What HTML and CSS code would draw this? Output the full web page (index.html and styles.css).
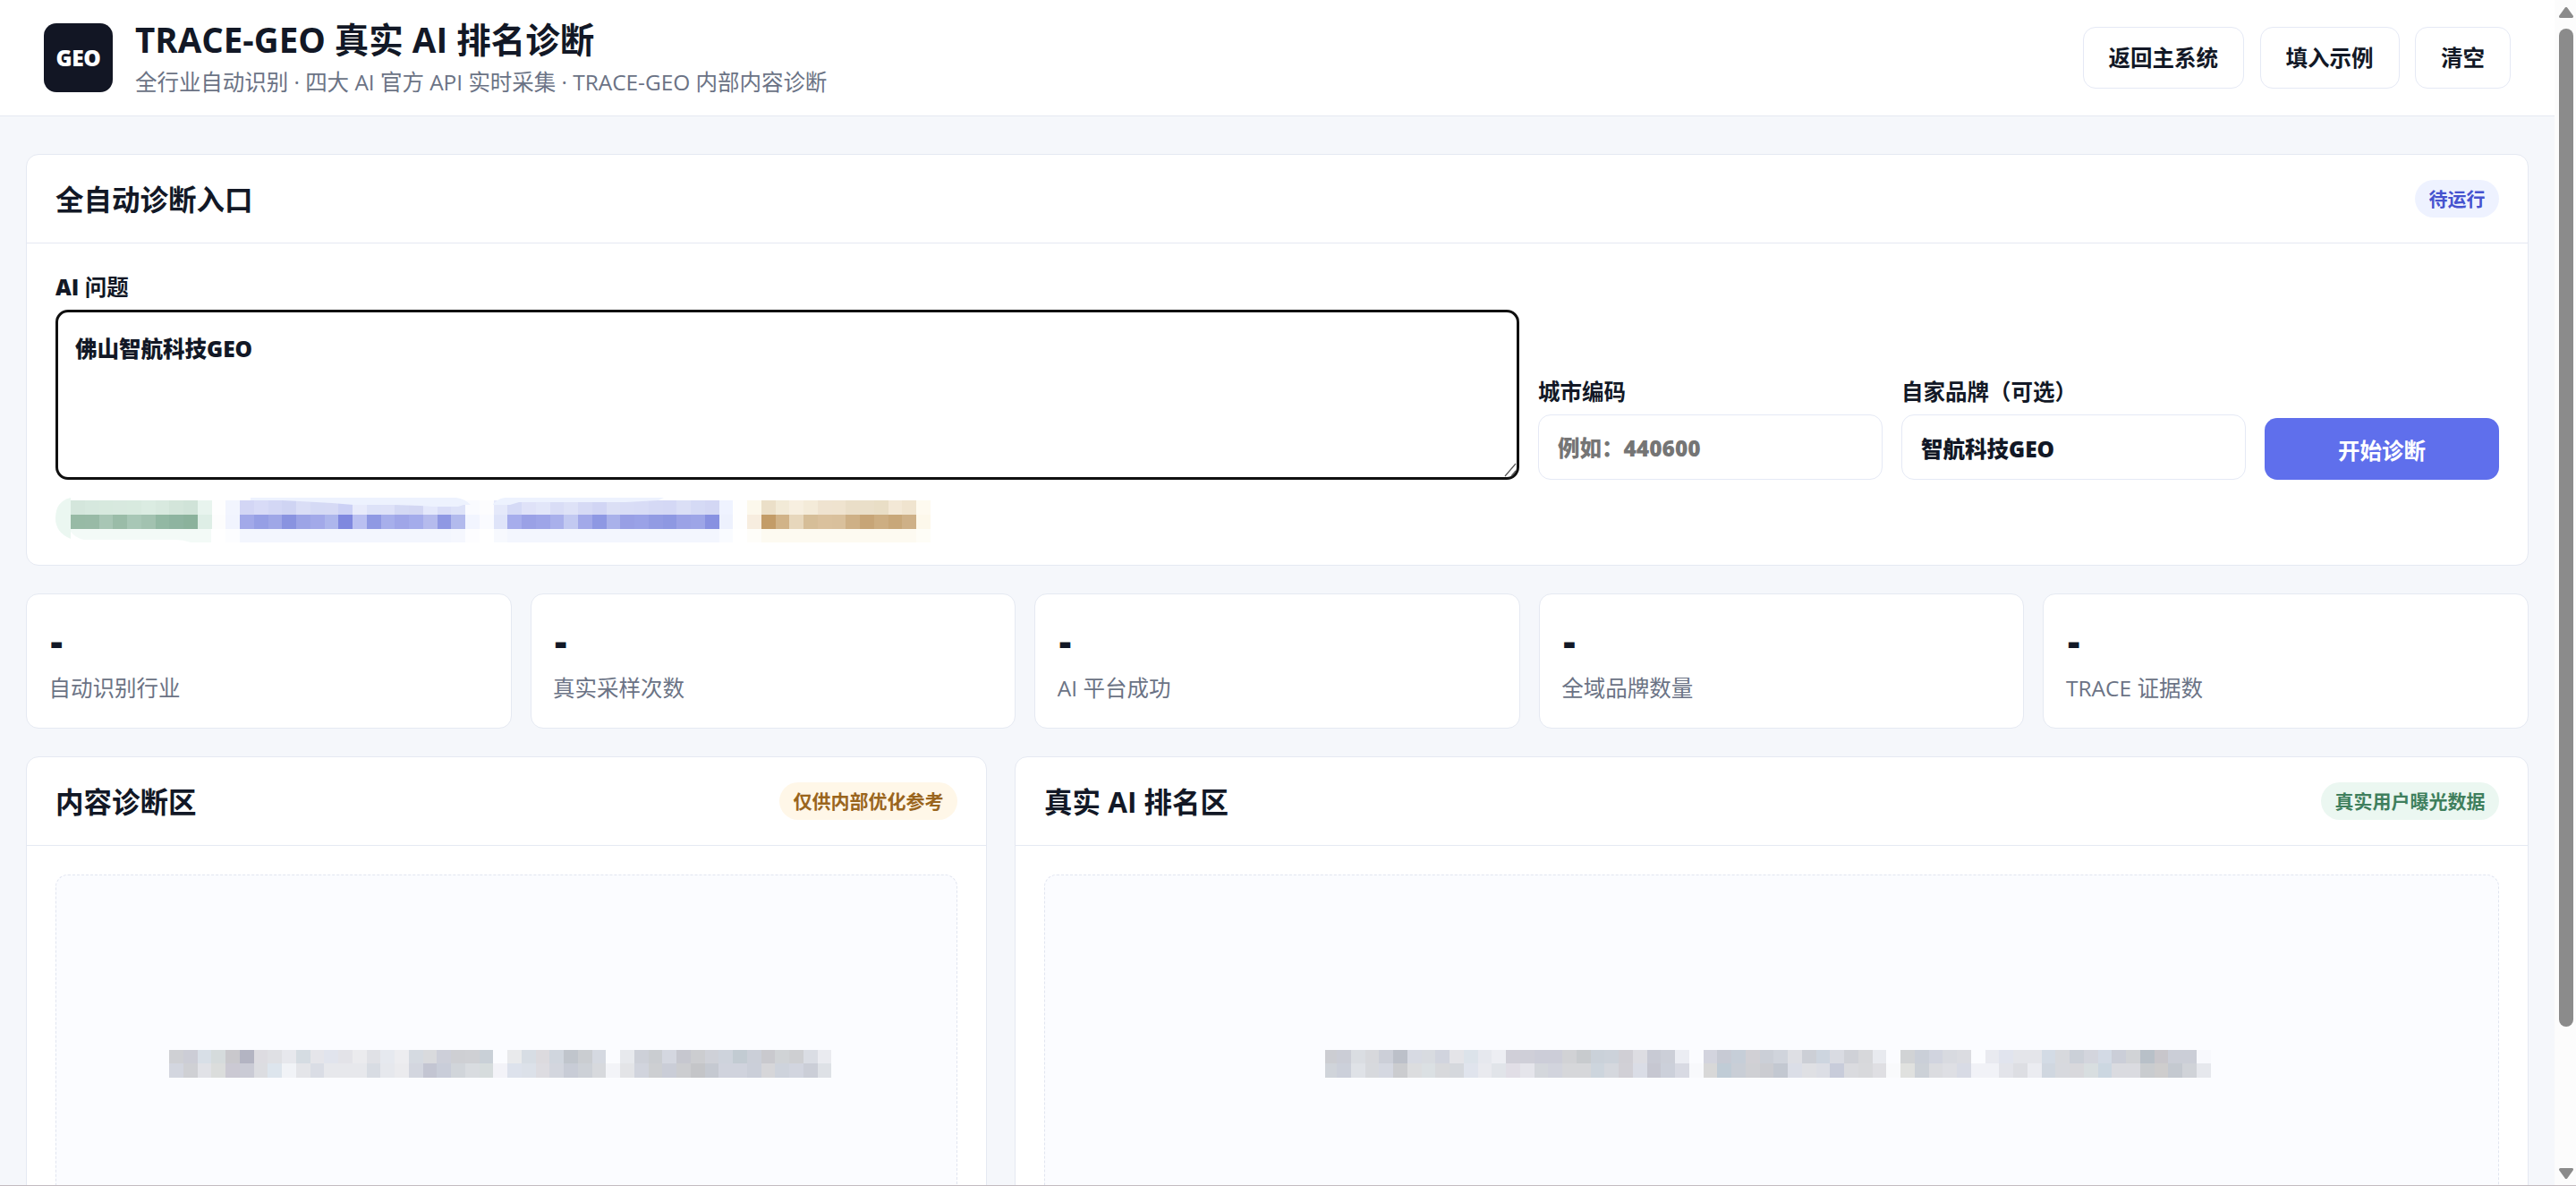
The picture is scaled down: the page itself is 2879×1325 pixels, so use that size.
FILE: index.html
```html
<!DOCTYPE html>
<html lang="zh-CN">
<head>
<meta charset="utf-8">
<title>TRACE-GEO 真实 AI 排名诊断</title>
<link rel="stylesheet" href="styles.css">
</head>
<body>
<div class="app">
  <div class="page">
    <header class="topbar">
      <div class="logo">GEO</div>
      <div class="brand">
        <h1>TRACE-GEO 真实 AI 排名诊断</h1>
        <p>全行业自动识别 · 四大 AI 官方 API 实时采集 · TRACE-GEO 内部内容诊断</p>
      </div>
      <nav class="actions">
        <button class="btn">返回主系统</button>
        <button class="btn">填入示例</button>
        <button class="btn">清空</button>
      </nav>
    </header>
    <main class="main">
      <section class="card entry">
        <div class="card-head"><h2>全自动诊断入口</h2><span class="pill blue">待运行</span></div>
        <div class="card-body">
          <div class="form">
            <label class="field"><span class="label"><span class="heavy">AI</span> 问题</span><span class="area"><textarea>佛山智航科技GEO</textarea><svg class="grip" viewBox="0 0 16 16" width="16" height="16"><path d="M2 15L14 1M9 15L14 9" stroke="#555" stroke-width="1.2" fill="none"/></svg></span></label>
            <label class="field"><span class="label">城市编码</span><input placeholder="例如：440600"></label>
            <label class="field"><span class="label">自家品牌（可选）</span><input value="智航科技GEO"></label>
            <button class="primary">开始诊断</button>
          </div>
          <svg class="chips" width="984" height="56" viewBox="62 555 984 56">
            <path d="M79 557Q62 561 62 580Q62 596 79 603Z" fill="#ebf7f1"/>
            <path d="M79 592H236V607H213Q205 604 196 604H94Q86 603 79 595Z" fill="#f3faf7"/>
            <g id="chip-cells"></g>
            <path d="M280 557H510Q519 558 526 565H518L512 567H484L470 566L440 565H395L371 563L335 561L315 560H280Z" fill="#edf2fe"/>
            <path d="M551 564Q558 557 565 557H742L736 560L700 562H580L570 565H551Z" fill="#edf2fe"/>
          </svg>
        </div>
      </section>
      <section class="stats">
        <div class="card stat"><b>-</b><span>自动识别行业</span></div>
        <div class="card stat"><b>-</b><span>真实采样次数</span></div>
        <div class="card stat"><b>-</b><span>AI 平台成功</span></div>
        <div class="card stat"><b>-</b><span>全域品牌数量</span></div>
        <div class="card stat"><b>-</b><span>TRACE 证据数</span></div>
      </section>
      <section class="panels">
        <div class="card">
          <div class="card-head"><h2>内容诊断区</h2><span class="pill amber">仅供内部优化参考</span></div>
          <div class="card-body"><div class="empty"><svg id="left-cells" class="left-cells" width="741" height="31"></svg></div></div>
        </div>
        <div class="card">
          <div class="card-head"><h2>真实 AI 排名区</h2><span class="pill green">真实用户曝光数据</span></div>
          <div class="card-body"><div class="empty"><svg id="right-cells" class="right-cells" width="993" height="31"></svg></div></div>
        </div>
      </section>
    </main>
  </div>
  <aside class="scrollbar">
    <svg width="16" height="12" viewBox="0 0 16 12"><path d="M8 1.5L14.5 10.5H1.5Z" fill="#8b8b8b" stroke="#8b8b8b" stroke-width="3" stroke-linejoin="round"/></svg>
    <div class="thumb"></div>
    <svg width="16" height="12" viewBox="0 0 16 12"><path d="M8 10.5L14.5 1.5H1.5Z" fill="#8b8b8b" stroke="#8b8b8b" stroke-width="3" stroke-linejoin="round"/></svg>
  </aside>
</div>
<div class="edge"></div>
<script src="cells.js"></script>
</body>
</html>
```
FILE: styles.css
```css
* { box-sizing: border-box; }
body {
  margin: 0;
  height: 1325px;
  overflow: hidden;
  background: #f5f7fb;
  color: #121826;
  font-family: "Open Sans", "Noto Sans CJK SC", sans-serif;
  font-size: 24.5px;
}
h1, h2, p { margin: 0; }
button, input, textarea { font: inherit; color: inherit; margin: 0; }
.app { display: flex; height: 1325px; overflow: hidden; }
.page { width: 2855px; flex: none; }

.topbar {
  display: flex;
  align-items: center;
  height: 130px;
  padding: 0 49px;
  background: #fff;
  border-bottom: 1px solid #e5e9f2;
}
.logo {
  width: 77px;
  height: 77px;
  border-radius: 14px;
  background: #121624;
  color: #fff;
  font-size: 24.5px;
  font-weight: 800;
  letter-spacing: -0.3px;
  line-height: 78px;
  text-align: center;
}
.brand { margin-left: 25px; }
.brand h1 { font-size: 38.5px; line-height: 48px; font-weight: 700; white-space: nowrap; }
.brand p { font-size: 24.5px; line-height: 34px; margin-top: 7px; color: #6b7385; letter-spacing: -0.05px; white-space: nowrap; }
.actions { display: flex; gap: 17.5px; margin-left: auto; }
.btn {
  height: 69px;
  padding: 0 28px;
  border: 1px solid #e5e9f5;
  border-radius: 14px;
  background: #fff;
  font-weight: 700;
  line-height: 60px;
}

.main { display: flex; flex-direction: column; gap: 31px; padding: 42px 29px 0; }
.card { background: #fff; border: 1px solid #e5e9f2; border-radius: 14px; }
.card-head {
  display: flex;
  align-items: center;
  justify-content: space-between;
  height: 99px;
  padding: 0 32px;
  border-bottom: 1px solid #e5e9f2;
}
.card-head h2 { font-size: 31.5px; line-height: 44px; font-weight: 700; padding-top: 2px; }
.pill {
  height: 42px;
  padding: 0 15.5px;
  border-radius: 21px;
  font-size: 21px;
  font-weight: 700;
  line-height: 43px;
}
.blue { background: #eef2ff; color: #4653cf; }
.amber { background: #fff7e8; color: #9a651d; }
.green { background: #ebf7f1; color: #3f7f5d; }
.card-body { padding: 32px; }

.entry { height: 460px; }
.form {
  display: grid;
  grid-template-columns: 1fr 385px 385px 262px;
  gap: 21px;
  align-items: end;
}
.field { display: flex; flex-direction: column; }
.label { font-weight: 700; line-height: 34px; margin-bottom: 8px; }
.heavy { font-weight: 800; }
.area { position: relative; display: block; height: 190px; }
textarea, input {
  display: block;
  width: 100%;
  border: 1px solid #e5e9f5;
  border-radius: 14px;
  padding: 1px 21px 0;
  background: #fff;
  font-weight: 800;
  outline: none;
}
textarea {
  height: 190px;
  padding: 24px 19px;
  border: 3px solid #101010;
  line-height: 34px;
  resize: none;
}
.grip { position: absolute; right: 2px; bottom: 3px; }
input { height: 73px; }
input::placeholder { color: #757575; opacity: 1; }
.primary {
  height: 69px;
  padding-top: 3px;
  border: 0;
  border-radius: 14px;
  background: #5f6fec;
  color: #fff;
  font-weight: 700;
}
.chips { display: block; margin-top: 18px; }

.stats { display: grid; grid-template-columns: repeat(5, 1fr); gap: 21px; }
.stat { height: 151px; padding: 25px 24.5px; display: flex; flex-direction: column; }
.stat b { font-size: 42px; line-height: 54px; font-weight: 800; padding-left: 2px; }
.stat span { line-height: 34px; margin-top: 9px; color: #6b7385; }

.panels { display: grid; grid-template-columns: 1074px 1fr; gap: 31px; }
.empty {
  display: flex;
  align-items: center;
  height: 423px;
  border: 1px dashed #e1e5f0;
  border-radius: 14px;
  background: #fbfcff;
}
.left-cells { margin-left: 126px; }
.right-cells { margin-left: 313px; }

.scrollbar {
  width: 24px;
  flex: none;
  display: flex;
  flex-direction: column;
  align-items: center;
  padding: 8px 3px 8px 5px;
  background: #fcfcfc;
}
.scrollbar svg { flex: none; }
.thumb { width: 16px; height: 1115px; margin: 12px 0 158px; border-radius: 8px; background: #8b8b8b; flex: none; }
.edge { position: fixed; left: 0; right: 0; bottom: 0; height: 1px; background: #c3bbc0; }
```
FILE: cells.js
```js
const PITCH = 15.75;

// Draws one row of colour blocks; "-" leaves a block empty, "hex*n" repeats it n times.
function row(target, x0, y, h, spec) {
  let k = 0;
  for (const token of spec.trim().split(/\s+/)) {
    const [color, count] = token.split("*");
    for (let i = 0; i < (+count || 1); i++, k++) {
      if (color === "-") continue;
      const left = Math.round(x0 + k * PITCH);
      const rect = document.createElementNS("http://www.w3.org/2000/svg", "rect");
      rect.setAttribute("x", left);
      rect.setAttribute("y", y);
      rect.setAttribute("width", Math.round(x0 + (k + 1) * PITCH) - left);
      rect.setAttribute("height", h);
      rect.setAttribute("fill", "#" + color);
      target.appendChild(rect);
    }
  }
}

const chips = document.getElementById("chip-cells");
row(chips, 79, 560, 16, `d4e6dc d6e8de d7e9de d8e9df d8eadf dbece2 d8e9df d3e5da d0e3d8 e8f4ee fefefe f2f5fe
  d3d6f5 d8dbf7 d3d7f5 cfd4f3 dadef6 d5daf5 d6daf5 ccd1f5 e8ebfb dde2f8 dee2f8 d4d9f4 d3d7f3 e4e8fb d9ddf7 dde2f8
  fafbff fdfdfe e5e9fa d5daf6 dfe2f8 e2e6f9 d9ddf6 dee2f7 d6daf5 d1d5f4 dbdff5 d9ddf6 d8dcf6 d5d9f5 d4d8f5
  dbdff6 d5daf5 d3d7f4 eff3ff fefefe fcf8ec ebdfc8 f2ead7 f7efe0 f4ebd9 efe3d0 efe3cf eadec8 eadfc9 e9dec6 f3e8d6 f0e4cf fefaf0`);
row(chips, 79, 576, 16, `97baa5 98baa6 a8c6b5 9abca8 a8c7b6 a2c2b0 92b8a3 8eb4a0 8bb29c deeee6 fdfdfd f1f4fe
  a2a9e9 969fe5 9fa7e7 8993e0 9ca4e6 a2a9e9 adb6ec 7f88df bac0f1 8f99e3 a7afeb 9fa6e8 a4aceb b5bbed 8f98e3 b2baed
  f2f5ff fafbff dfe4f9 a6adec 9aa1e6 9ea5e8 a9b0eb c2c9f1 a2a9e9 8e98e3 a9b1ea 989fe5 9aa2e7 929be3 8e98e2 9ba2e6
  9da5e7 8891e1 edf1fd fefefe f7eddf c39c68 d1b388 e7d7bc d6be98 dac19d d9c09c ceb086 c7a577 cdae82 c8a779 ceb087 fdf8eb`);
row(chips, 79, 592, 15, `-*11 fcfdff f3f6fe*15 f5f7fe fdfdff - f7f9fe f3f6fe*15 f9fbff - fefdf9 fdfaf1*11 fefdf7`);

const left = document.getElementById("left-cells");
row(left, 0, 0, 15, `cfd0d4 cccdd6 d8dfe7 d5dbdc c9c8cc b3b4c2 dddce1 dfe0e4 e7e8ed d5dce2 e5e5ea e1e4ed e3e3e8
  ebebee e0e1e6 e6e9ef ededf0 d5dae1 d9dadd cdcfd9 cecfd3 cfd0d4 c9d0d7 - e9eaec d7dde4 dcdade d0d6de c0c5cc cacdd1
  d5d9e1 - e7e9ed cdd0d8 cacdd1 d4d7e0 c6c7cf cccdd0 cfd1d8 ced3dc c2cbd2 cbcfd8 c9c9ce d0d3d6 cecfd2 dadde4 eaebf0`);
row(left, 0, 15, 16, `d3d6df cfd0d4 e1e2e7 dbdddc cbc9d3 cacbd5 dcdde1 dde5ed f1f3f7 e4e5e9 dadde5 e7e8ec*3 d8dce3
  e6e8ed ebebee d3d6df c3c5d2 c9cdd9 d1d5da d9dce0 d6dcdd f3f3f8 dde2ec dce1e9 dddce1 d3d6de c8ccd6 cdd1d7 d7d9dd
  f3f4f8 e3e4e7 d1d4dd cdcfd2 cacdd7 cccdd0 c4c5c8 c5c9d1 d0d3dd*2 cbcfd9 d6d6d9 ced3dc d2d5df cbced7 dee1e6`);

const right = document.getElementById("right-cells");
row(right, -2.7, 0, 15, `cccdd2 cbcdd6 dadde2 d7d8dc cccfd8 bcc0c9 d7dae3 d8dbe0 d1d4de e4e4e8 dce3ea e6e8ee edeef3
  d0cfd8 cfcfd8 cccdd8*2 d1d2d5 c8cbce cad1d9 ccd2da d0cfd5 dddde2 c8cad4 cccfd8 ebedf3 - d3d4de c7cad4 c6ced8 d1d0d5
  cbcfd7 d0d4dc dedfe4 cccfd6 cdd5df d9dbe2 cfd1d7 d7d8db e8eaef - d1d3d5 cacfd8 d1d4df d8dae0 dbdce1 - e9eaf0 e1e4ee
  e4e5ea*2 d3dbe5 d7d9dd cbd0d8 d3d5dd d3dae5 cbced8 d1d3d6 b8c0c8 c8c6cb cbced7*2 f8f9fd`);
row(right, -2.7, 15, 16, `d0d4da ccd0da dfe2e7 d7d9dd d5d8e1 cbcccf dcdddf dbe0e3 d8d9dc d5d8dd e0e4ed e9eaef e1e4e9
  e1dee6 e5e5eb d4d7dc d2d4dd d6d7da*2 cdd5dd d5d8de d1d0d6 dadde6 c6c7d1 ccd0da d8dae3 f8f9fc d8d8d8 c0ccd6 c9ced6
  cfd0d4 cbccd1 c3c8d1 dbdee7 dfe0e4 dcdee5 c8ccda dadbdf d8d9dc dfdfe3 f9fafc e0e1df ccd1d7 dbdce0 dedfe4 d8dbe5
  f1f2f7*2 e3e4ea dddee3 ebecf1 d0d7e0 d7d9de d8d8dc d8dee0 ccd7e1 dadbe0*2 c9cccf cecdcd c4c9d0 d0d3d8 e6e8ed`);
```
